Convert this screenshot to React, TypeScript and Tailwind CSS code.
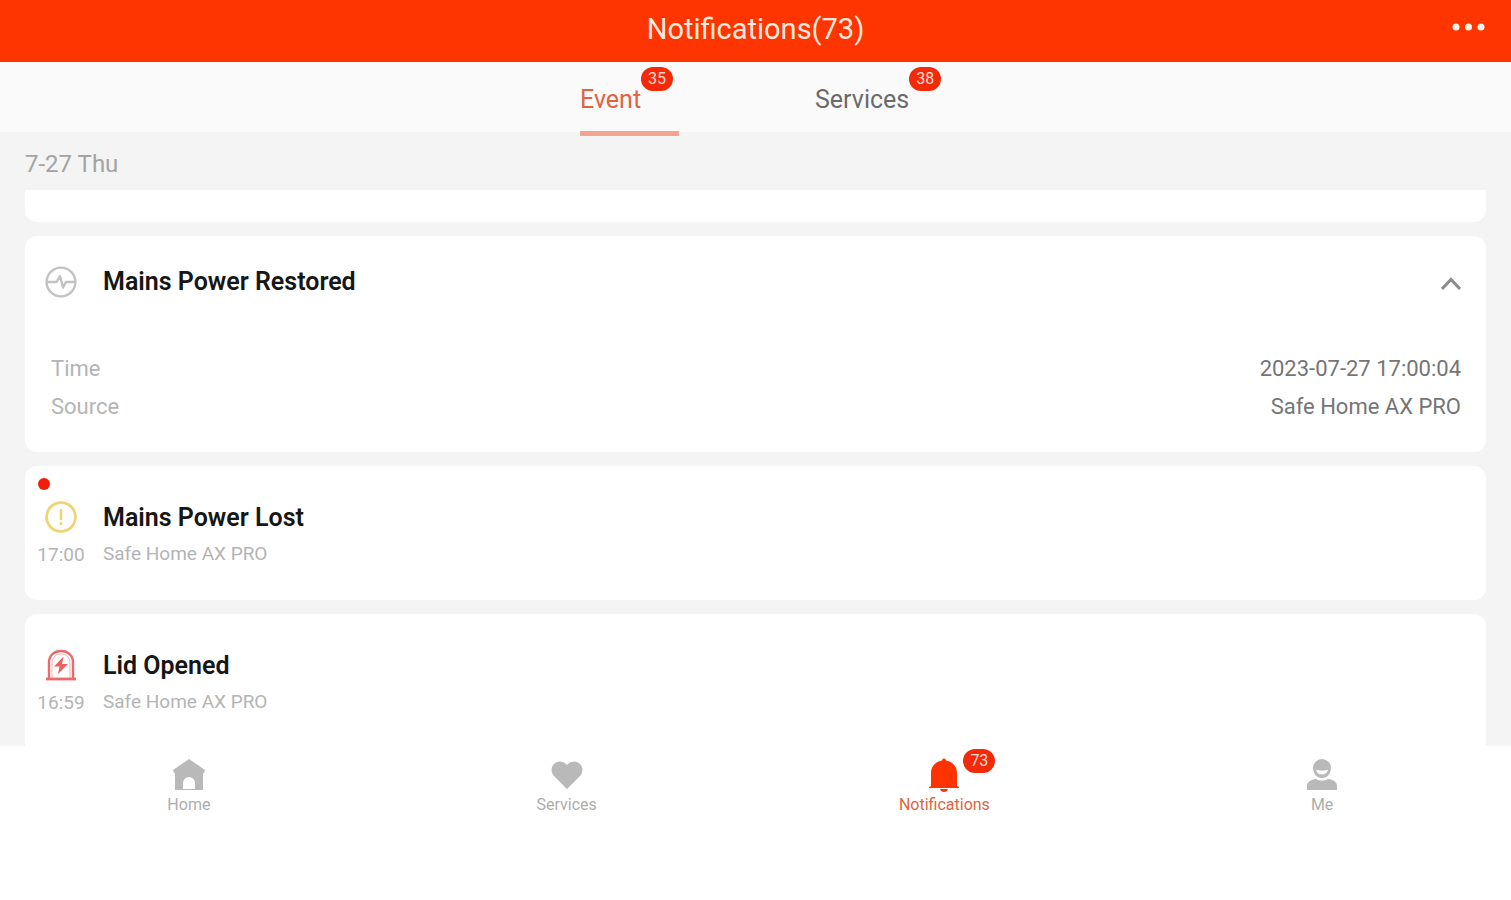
import { useState } from 'react';
import type { ReactNode } from 'react';

const PowerIcon = () => (
  <svg className="h-8 w-8" viewBox="0 0 32 32" fill="none" stroke="#c2c2c2" strokeWidth="2.4" strokeLinejoin="round" aria-hidden="true">
    <circle cx="16" cy="16" r="14.4" />
    <path d="M2 16h9.5l3.5-6 3 11.5 3-5.5h9" />
  </svg>
);

const WarningIcon = () => (
  <svg className="h-8 w-8" viewBox="0 0 32 32" fill="none" stroke="#f0d472" strokeWidth="2.8" aria-hidden="true">
    <circle cx="16" cy="16" r="14.4" />
    <path d="M16 8v11M16 21v3" strokeWidth="2.4" />
  </svg>
);

const AlarmIcon = () => (
  <svg className="h-8 w-8" viewBox="0 0 32 32" fill="none" stroke="#ec6a6c" strokeWidth="2.4" aria-hidden="true">
    <path d="M4 29V13.5C4 6.500 9 2 16 2s12 4.500 12 11.500V29" />
    <path d="M7 29V14c0-5 3.500-9 9-9s9 4 9 9v15" strokeWidth="1" stroke="#f6b3b4" />
    <path d="M1 30h30" strokeWidth="2.8" />
    <path d="M18.500 7.500L9 17.500h5.500L13 25l10-10h-6z" fill="#ec5f62" stroke="none" />
  </svg>
);

const HomeIcon = () => (
  <svg className="h-9 w-9" viewBox="0 0 36 36" fill="#b9b9b9" aria-hidden="true">
    <path d="M18 2L2 13l1 3h1v17h28V16h1l1-3zM12 32v-6a6 6 0 0 1 12 0v6H12z" fillRule="evenodd" />
  </svg>
);

const HeartIcon = () => (
  <svg className="h-9 w-9" viewBox="0 0 36 36" fill="#b9b9b9" aria-hidden="true">
    <path d="M18 32L5 19C1 14.500 2 8 7 5.500c4-2 8.500-.5 11 2.500 2.500-3 7-4.500 11-2.500 5 2.500 6 9 2 13.500z" />
  </svg>
);

const BellIcon = () => (
  <svg className="h-9 w-9" viewBox="0 0 36 36" fill="#ff3300" aria-hidden="true">
    <path d="M16 3.500a2 2 0 0 1 4 0C26.500 4.500 31 9.500 31 16v13l2 1v1H3v-1l2-1V16C5 9.500 9.500 4.500 16 3.500z" />
    <path d="M14 32h8c-.5 2-2 3-4 3s-3.500-1-4-3z" />
  </svg>
);

const UserIcon = () => (
  <svg className="h-9 w-9" viewBox="0 0 36 36" fill="#b9b9b9" aria-hidden="true">
    <path d="M18 2a9 9 0 0 1 9 9c0 5-3.500 10-9 10s-9-5-9-10a9 9 0 0 1 9-9zm-6 10.500c.5 3 2.500 5 6 5s5.500-2 6-5c-3 1.500-9 1.500-12 0z" fillRule="evenodd" />
    <path d="M3 33v-4c0-4 3.500-6.500 9-7 3.500 2 8.500 2 12 0 5.500.5 9 3 9 7v4z" />
  </svg>
);

const Badge = ({ count, className }: { count: number; className: string }) => (
  <span className={`absolute flex h-6 w-8 items-center justify-center rounded-full bg-[#f22a0a] text-base text-[#ffd9cc] ${className}`}>
    {count}
  </span>
);

const tabs = [
  { id: 'event', label: 'Event', count: 35 },
  { id: 'services', label: 'Services', count: 38 },
];

const events = [
  { title: 'Mains Power Lost', source: 'Safe Home AX PRO', time: '17:00', icon: <WarningIcon />, unread: true },
  { title: 'Lid Opened', source: 'Safe Home AX PRO', time: '16:59', icon: <AlarmIcon />, unread: false },
];

const navItems: { label: string; icon: ReactNode; count?: number }[] = [
  { label: 'Home', icon: <HomeIcon /> },
  { label: 'Services', icon: <HeartIcon /> },
  { label: 'Notifications', icon: <BellIcon />, count: 73 },
  { label: 'Me', icon: <UserIcon /> },
];

const App = () => {
  const [activeTab, setActiveTab] = useState('event');
  const [open, setOpen] = useState(true);

  return (
    <div className="flex h-screen flex-col bg-[#f4f4f4] font-['Roboto',sans-serif]">
      <header className="grid h-[62px] shrink-0 grid-cols-[1fr_auto_1fr] items-center bg-[#ff3500] px-6">
        <h1 className="col-start-2 pb-1 text-[29px] leading-8 text-[#ffe9dc]">Notifications(73)</h1>
        <button type="button" aria-label="More" className="justify-self-end pb-2">
          <svg className="h-2 w-9" viewBox="0 0 36 8" fill="#fff3ec" aria-hidden="true">
            <circle cx="5" cy="4" r="3.5" />
            <circle cx="17.5" cy="4" r="3.5" />
            <circle cx="30" cy="4" r="3.5" />
          </svg>
        </button>
      </header>

      <div className="flex h-[74px] shrink-0 justify-center gap-[119px] bg-linear-to-b from-[#fafafa] from-95% to-[#f4f4f4] to-95%">
        {tabs.map(tab => (
          <button
            key={tab.id}
            type="button"
            className="flex w-[116px] flex-col items-start justify-between pt-[22px] text-left"
            onClick={() => setActiveTab(tab.id)}
          >
            <span className={`relative text-[25px] leading-8 ${activeTab === tab.id ? 'text-[#e2633f]' : 'text-[#6a6a6a]'}`}>
              {tab.label}
              <Badge count={tab.count} className="-top-[17px] left-full" />
            </span>
            <span className={`h-[5px] w-[99px] ${activeTab === tab.id ? 'bg-[#f2a391]' : ''}`} />
          </button>
        ))}
      </div>

      <main className="flex min-h-0 flex-1 flex-col px-[25px]">
        <h2 className="h-[54px] shrink-0 pt-3 text-2xl leading-8 text-[#a3a3a3]">7-27 Thu</h2>

        <div className="flex min-h-0 flex-1 flex-col gap-[14px] overflow-y-auto [scrollbar-width:none]">
          <div className="h-8 shrink-0 rounded-b-xl bg-white" />

          <section className="shrink-0 rounded-xl bg-white pt-[30px] pr-[25px] pb-[26px] pl-5">
            <div className="flex items-center">
              <PowerIcon />
              <h3 className="ml-[26px] flex-1 text-[25px] leading-8 font-semibold text-[#161616]">Mains Power Restored</h3>
              <button type="button" aria-label="Toggle details" aria-expanded={open} onClick={() => setOpen(!open)}>
                <svg className="h-5 w-5" viewBox="0 0 20 20" fill="none" stroke="#8c8c8c" strokeWidth="3" aria-hidden="true">
                  <path d="M1 17l9-9.5 9 9.5" />
                </svg>
              </button>
            </div>
            {open && (
              <dl className="mt-[52px] ml-[6px] text-[22px] leading-[38px]">
                <div className="flex justify-between">
                  <dt className="text-[#b4b4b4]">Time</dt>
                  <dd className="text-[#757575]">2023-07-27 17:00:04</dd>
                </div>
                <div className="flex justify-between">
                  <dt className="text-[#b4b4b4]">Source</dt>
                  <dd className="text-[#757575]">Safe Home AX PRO</dd>
                </div>
              </dl>
            )}
          </section>

          {events.map(event => (
            <article key={event.title} className="relative flex h-[134px] shrink-0 gap-4 rounded-xl bg-white pt-[35px] pl-3 last:h-[148px]">
              {event.unread && <span className="absolute top-3 left-[13px] h-3 w-3 rounded-full bg-[#f01e0a]" />}
              <div className="flex w-12 flex-col items-center">
                {event.icon}
                <time className="mt-[6px] text-[19px] leading-8 text-[#b4b4b4]">{event.time}</time>
              </div>
              <div className="pt-px pl-[2px]">
                <h3 className="text-[25px] leading-8 font-semibold text-[#161616]">{event.title}</h3>
                <p className="mt-1 text-[19px] leading-8 text-[#b4b4b4]">{event.source}</p>
              </div>
            </article>
          ))}
        </div>
      </main>

      <nav className="grid h-[154px] shrink-0 grid-cols-4 items-start bg-white pt-[11px]">
        {navItems.map(item => (
          <a
            key={item.label}
            href="#"
            className={`flex flex-col items-center text-base leading-6 ${item.count ? 'text-[#dc6442]' : 'text-[#adadad]'}`}
            onClick={e => e.preventDefault()}
          >
            <span className="relative">
              {item.icon}
              {item.count && <Badge count={item.count} className="-top-2 left-[37px]" />}
            </span>
            {item.label}
          </a>
        ))}
      </nav>
    </div>
  );
};

export default App;
